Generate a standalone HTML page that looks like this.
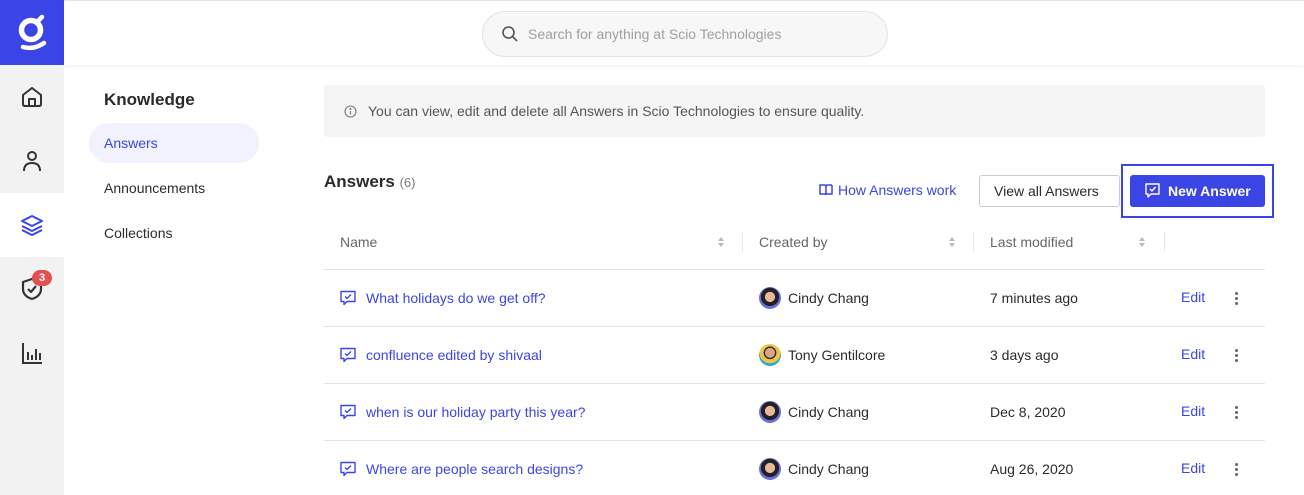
<!DOCTYPE html>
<html><head><meta charset="utf-8"><style>
*{margin:0;padding:0;box-sizing:border-box}
body{width:1304px;height:495px;overflow:hidden;background:#fff;font-family:"Liberation Sans",sans-serif;position:relative;color:#2b2b2b}
.abs{position:absolute}
.side{left:0;top:0;width:64px;height:495px;background:#f2f2f2}
.logo{left:0;top:0;width:64px;height:65px;background:#3b45e6}
.act{left:0;top:193px;width:64px;height:64px;background:#fff}
.top{left:64px;top:0;width:1240px;height:65px;background:#fff;border-top:1px solid #e2e2e2;box-shadow:0 2px 4px rgba(0,0,0,.05)}
.search{left:482px;top:11px;width:406px;height:46px;border:1px solid #e4e4e4;border-radius:23px;background:#f7f7f7}
.t{position:absolute;white-space:nowrap}
.blue{color:#3b45e6}
.hr{position:absolute;left:324px;width:941px;height:1px;background:#e4e4e4}
.sep{position:absolute;top:232px;width:1px;height:20px;background:#e8e8e8}
.sort{position:absolute;top:236px;width:8px;height:12px}
.av{position:absolute;width:22px;height:22px;border-radius:50%;left:759px}
.dots{position:absolute;left:1235px;width:3px}
.dots i{display:block;width:3px;height:3px;border-radius:50%;background:#666;margin-bottom:2px}
</style></head><body>
<div class="abs side"></div>
<div class="abs logo"></div>
<svg class="abs" style="left:14px;top:12px" width="36" height="40" viewBox="0 0 36 40"><circle cx="17" cy="18" r="9.5" fill="none" stroke="#fff" stroke-width="5.5"/><path d="M24 9 L28 5" stroke="#fff" stroke-width="4.5" stroke-linecap="round"/><path d="M9 35 Q20 38 30 31" fill="none" stroke="#fff" stroke-width="4.5" stroke-linecap="round"/></svg>
<div class="abs act"></div>
<svg class="abs" style="left:21px;top:86px" width="22" height="22" viewBox="0 0 22 22" fill="none" stroke="#333" stroke-width="2" stroke-linejoin="round"><path d="M2 9 L11 2 L20 9 V18 Q20 20 18 20 H4 Q2 20 2 18 Z"/><path d="M8 20 V13 H14 V20"/></svg>
<svg class="abs" style="left:22px;top:150px" width="20" height="22" viewBox="0 0 20 22" fill="none" stroke="#333" stroke-width="2"><circle cx="10" cy="6" r="4"/><path d="M2 21 Q2 13 10 13 Q18 13 18 21"/></svg>
<svg class="abs" style="left:20px;top:214px" width="24" height="22" viewBox="0 0 24 22" fill="none" stroke="#3b45e6" stroke-width="2" stroke-linejoin="round"><path d="M12 2 L22 7 L12 12 L2 7 Z"/><path d="M2 12 L12 17 L22 12"/><path d="M2 16 L12 21 L22 16"/></svg>
<svg class="abs" style="left:21px;top:277px" width="22" height="24" viewBox="0 0 22 24" fill="none" stroke="#333" stroke-width="2.2" stroke-linejoin="round"><path d="M11 2 L20 5 V12 Q20 19 11 22 Q2 19 2 12 V5 Z"/><path d="M7 12 L10 15 L15 9"/></svg>
<div class="abs" style="left:32px;top:270px;width:20px;height:16px;border-radius:8px;background:#e05252;color:#fff;font-size:11px;font-weight:bold;text-align:center;line-height:16px">3</div>
<svg class="abs" style="left:21px;top:342px" width="22" height="22" viewBox="0 0 22 22" fill="none" stroke="#333" stroke-width="2"><path d="M2 1 V21 H21"/><path d="M7 10 V18 M11 13 V18 M15 7 V18 M19 11 V18"/></svg>
<div class="abs top"></div>
<div class="abs search"></div>
<svg class="abs" style="left:501px;top:25px" width="18" height="18" viewBox="0 0 18 18" fill="none" stroke="#555" stroke-width="1.6"><circle cx="7.5" cy="7.5" r="5.5"/><path d="M11.5 11.5 L16 16"/></svg>
<div class="t" style="left:528px;top:26px;font-size:14px;color:#a0a0a0">Search for anything at Scio Technologies</div>
<div class="t" style="left:104px;top:90px;font-size:17px;font-weight:bold;color:#2a2a2a">Knowledge</div>
<div class="abs" style="left:89px;top:123px;width:170px;height:40px;border-radius:20px;background:#f1f2fd"></div>
<div class="t blue" style="left:104px;top:135px;font-size:14px">Answers</div>
<div class="t" style="left:104px;top:180px;font-size:14px">Announcements</div>
<div class="t" style="left:104px;top:225px;font-size:14px">Collections</div>
<div class="abs" style="left:324px;top:85px;width:941px;height:52px;background:#f5f5f5;border-radius:3px"></div>
<svg class="abs" style="left:344px;top:105px" width="13" height="13" viewBox="0 0 13 13" fill="none" stroke="#777" stroke-width="1.1"><circle cx="6.5" cy="6.5" r="5.5"/><path d="M6.5 6 V9.5"/><circle cx="6.5" cy="4" r=".5" fill="#777"/></svg>
<div class="t" style="left:368px;top:103px;font-size:14px;color:#555">You can view, edit and delete all Answers in Scio Technologies to ensure quality.</div>
<div class="t" style="left:324px;top:172px;font-size:17px;font-weight:bold;color:#2a2a2a">Answers <span style="font-size:13px;font-weight:normal;color:#777">(6)</span></div>
<svg class="abs" style="left:819px;top:184px" width="14" height="12" viewBox="0 0 14 12" fill="none" stroke="#3b45e6" stroke-width="1.5"><path d="M1 1 H5.5 Q7 1 7 2.5 V11 Q7 10 5.5 10 H1 Z M13 1 H8.5 Q7 1 7 2.5 M13 1 V10 H8.5 Q7 10 7 11"/></svg>
<div class="t blue" style="left:838px;top:182px;font-size:14px">How Answers work</div>
<div class="abs" style="left:979px;top:175px;width:141px;height:32px;border:1px solid #ccc;border-radius:3px"></div>
<div class="t" style="left:994px;top:183px;font-size:14px">View all Answers</div>
<div class="abs" style="left:1121px;top:164px;width:153px;height:54px;border:2px solid #3b45e6"></div>
<div class="abs" style="left:1130px;top:175px;width:135px;height:32px;background:#3b45e6;border-radius:3px"></div>
<svg class="abs" style="left:1144px;top:182px" width="17" height="17" viewBox="0 0 17 17" fill="none" stroke="#fff" stroke-width="1.4" stroke-linejoin="round"><path d="M2 2 H15 V12 H7 L4 15 V12 H2 Z"/><path d="M6 7 L8 9 L11.5 5"/></svg>
<div class="t" style="left:1168px;top:183px;font-size:14px;font-weight:bold;color:#fff">New Answer</div>
<div class="t" style="left:340px;top:234px;font-size:14px;color:#666">Name</div>
<div class="t" style="left:759px;top:234px;font-size:14px;color:#666">Created by</div>
<div class="t" style="left:990px;top:234px;font-size:14px;color:#666">Last modified</div>
<div class="sep" style="left:742px"></div><div class="sep" style="left:973px"></div><div class="sep" style="left:1164px"></div>
<svg class="sort" style="left:717px" viewBox="0 0 8 12" fill="#bbb"><path d="M4 1 L7 5 H1Z M4 11 L7 7 H1Z"/></svg>
<svg class="sort" style="left:948px" viewBox="0 0 8 12" fill="#bbb"><path d="M4 1 L7 5 H1Z M4 11 L7 7 H1Z"/></svg>
<svg class="sort" style="left:1138px" viewBox="0 0 8 12" fill="#bbb"><path d="M4 1 L7 5 H1Z M4 11 L7 7 H1Z"/></svg>
<div class="hr" style="top:269px"></div>
<div class="hr" style="top:326px"></div>
<div class="hr" style="top:383px"></div>
<div class="hr" style="top:440px"></div>

<svg class="abs" style="left:340px;top:290px" width="16" height="17" viewBox="0 0 16 17" fill="none" stroke="#3b45e6" stroke-width="1.4" stroke-linejoin="round"><path d="M1 1.5 H15 V11.5 H7 L4 14.5 V11.5 H1 Z"/><path d="M5 6.5 L7 8.5 L11 4.5"/></svg>
<div class="t blue" style="left:366px;top:290px;font-size:14px">What holidays do we get off?</div>
<div class="av" style="top:287px;background:radial-gradient(circle at 50% 45%,#e8b89a 0 30%,#222 32% 55%,#6b6ee0 57%)"></div>
<div class="t" style="left:788px;top:290px;font-size:14px">Cindy Chang</div>
<div class="t" style="left:990px;top:290px;font-size:14px">7 minutes ago</div>
<div class="t blue" style="left:1181px;top:289px;font-size:14px">Edit</div>
<div class="dots" style="top:292px"><i></i><i></i><i></i></div>

<svg class="abs" style="left:340px;top:347px" width="16" height="17" viewBox="0 0 16 17" fill="none" stroke="#3b45e6" stroke-width="1.4" stroke-linejoin="round"><path d="M1 1.5 H15 V11.5 H7 L4 14.5 V11.5 H1 Z"/><path d="M5 6.5 L7 8.5 L11 4.5"/></svg>
<div class="t blue" style="left:366px;top:347px;font-size:14px">confluence edited by shivaal</div>
<div class="av" style="top:344px;background:radial-gradient(circle at 50% 40%,#d9a77f 0 28%,#2a2a2a 30% 36%,#f3c24a 38% 60%,#2aa8c8 62%)"></div>
<div class="t" style="left:788px;top:347px;font-size:14px">Tony Gentilcore</div>
<div class="t" style="left:990px;top:347px;font-size:14px">3 days ago</div>
<div class="t blue" style="left:1181px;top:346px;font-size:14px">Edit</div>
<div class="dots" style="top:349px"><i></i><i></i><i></i></div>

<svg class="abs" style="left:340px;top:404px" width="16" height="17" viewBox="0 0 16 17" fill="none" stroke="#3b45e6" stroke-width="1.4" stroke-linejoin="round"><path d="M1 1.5 H15 V11.5 H7 L4 14.5 V11.5 H1 Z"/><path d="M5 6.5 L7 8.5 L11 4.5"/></svg>
<div class="t blue" style="left:366px;top:404px;font-size:14px">when is our holiday party this year?</div>
<div class="av" style="top:401px;background:radial-gradient(circle at 50% 45%,#e8b89a 0 30%,#222 32% 55%,#6b6ee0 57%)"></div>
<div class="t" style="left:788px;top:404px;font-size:14px">Cindy Chang</div>
<div class="t" style="left:990px;top:404px;font-size:14px">Dec 8, 2020</div>
<div class="t blue" style="left:1181px;top:403px;font-size:14px">Edit</div>
<div class="dots" style="top:406px"><i></i><i></i><i></i></div>

<svg class="abs" style="left:340px;top:461px" width="16" height="17" viewBox="0 0 16 17" fill="none" stroke="#3b45e6" stroke-width="1.4" stroke-linejoin="round"><path d="M1 1.5 H15 V11.5 H7 L4 14.5 V11.5 H1 Z"/><path d="M5 6.5 L7 8.5 L11 4.5"/></svg>
<div class="t blue" style="left:366px;top:461px;font-size:14px">Where are people search designs?</div>
<div class="av" style="top:458px;background:radial-gradient(circle at 50% 45%,#e8b89a 0 30%,#222 32% 55%,#6b6ee0 57%)"></div>
<div class="t" style="left:788px;top:461px;font-size:14px">Cindy Chang</div>
<div class="t" style="left:990px;top:461px;font-size:14px">Aug 26, 2020</div>
<div class="t blue" style="left:1181px;top:460px;font-size:14px">Edit</div>
<div class="dots" style="top:463px"><i></i><i></i><i></i></div>
</body></html>
